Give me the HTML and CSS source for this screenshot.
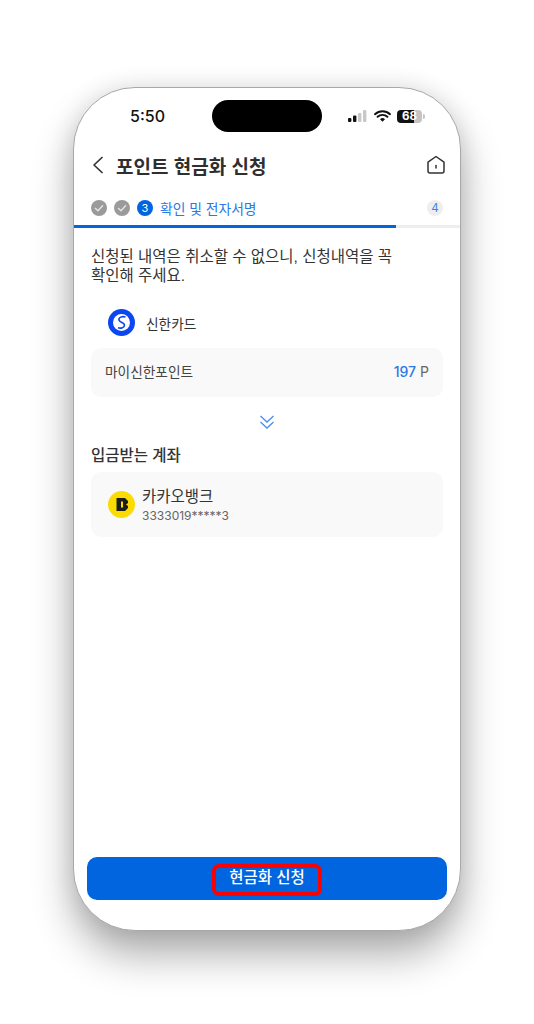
FILE: index.html
```html
<!DOCTYPE html>
<html lang="ko">

<head>
    <meta charset="UTF-8">
    <meta name="viewport" content="width=device-width, initial-scale=1.0">
    <title>포인트 현금화 신청</title>
    <link rel="stylesheet" href="styles.css">
</head>

<body>
    <div class="phone">
        <div class="statusbar">
            <span class="time">5:50</span>
            <div class="island"></div>
            <div class="status-icons">
                <svg class="signal" width="20" height="12" viewBox="0 0 20 12">
                    <rect x="0" y="8" width="3.4" height="4" rx="1" fill="#111"/>
                    <rect x="5" y="5.6" width="3.4" height="6.4" rx="1" fill="#111"/>
                    <rect x="10" y="3" width="3.4" height="9" rx="1" fill="#c8c8c8"/>
                    <rect x="15" y="0" width="3.4" height="12" rx="1" fill="#c8c8c8"/>
                </svg>
                <svg class="wifi" width="17" height="12" viewBox="0 0 17 12">
                    <path d="M1 4.2a11 11 0 0 1 15 0M3.6 6.8a7.2 7.2 0 0 1 9.8 0" fill="none" stroke="#111" stroke-width="1.9" stroke-linecap="round"/>
                    <path d="M6 9.2a3.5 3.5 0 0 1 5 0L8.500 11.800z" fill="#111"/>
                </svg>
                <div class="battery"><span class="battery-num">68</span></div>
                <div class="battery-cap"></div>
            </div>
        </div>

        <div class="topbar">
            <svg class="back" width="12" height="18" viewBox="0 0 12 18">
                <path d="M10 1.500L2 9l8 7.500" fill="none" stroke="#333" stroke-width="1.700" stroke-linecap="round" stroke-linejoin="round"/>
            </svg>
            <h1 class="title">포인트 현금화 신청</h1>
            <svg class="home" width="20" height="20" viewBox="0 0 20 20">
                <path d="M2 7.200L10 1.500l8 5.700V16a2 2 0 0 1-2 2H4a2 2 0 0 1-2-2z" fill="none" stroke="#333" stroke-width="1.500" stroke-linejoin="round"/>
                <path d="M10 10.500v2.600" stroke="#333" stroke-width="1.500" stroke-linecap="round"/>
            </svg>
        </div>

        <div class="steps">
            <span class="step-done"><svg width="10" height="8" viewBox="0 0 10 8"><path d="M1 4l3 2.800L9 1.200" fill="none" stroke="#e4e4e4" stroke-width="1.400"/></svg></span>
            <span class="step-done"><svg width="10" height="8" viewBox="0 0 10 8"><path d="M1 4l3 2.800L9 1.200" fill="none" stroke="#e4e4e4" stroke-width="1.400"/></svg></span>
            <span class="step-now">3</span>
            <span class="step-label">확인 및 전자서명</span>
            <span class="step-total">4</span>
        </div>
        <div class="progress"><div class="progress-fill"></div></div>

        <div class="content">
            <p class="notice">신청된 내역은 취소할 수 없으니, 신청내역을 꼭<br>확인해 주세요.</p>

            <div class="card-head">
                <svg class="logo" width="27" height="27" viewBox="0 0 27 27">
                    <circle cx="13.500" cy="13.500" r="13.500" fill="#0b46f0"/>
                    <circle cx="13.500" cy="13.500" r="8.500" fill="#fff"/>
                    <path d="M17.500 8C14 6.800 10.500 8.500 11 11c.5 2.500 5.500 2.500 5.500 5 0 2.500-3.500 3.800-6.500 2.800" fill="none" stroke="#0b46f0" stroke-width="1.600"/>
                </svg>
                <span class="card-name">신한카드</span>
            </div>
            <div class="box point-box">
                <span class="point-name">마이신한포인트</span>
                <span class="point-value"><b>197</b> P</span>
            </div>

            <div class="arrow">
                <svg width="16" height="16" viewBox="0 0 16 16">
                    <path d="M1.500 2L8 8l6.500-6M1.500 8L8 14l6.500-6" fill="none" stroke="#4a8df0" stroke-width="1.300"/>
                </svg>
            </div>

            <h2 class="sub-title">입금받는 계좌</h2>
            <div class="box bank-box">
                <svg class="logo" width="27" height="27" viewBox="0 0 27 27">
                    <circle cx="13.500" cy="13.500" r="13.500" fill="#fcdc00"/>
                    <path d="M8.500 7h8.500l3 3v2l-2 1.500 2 1.500v2l-3 3H8.500z" fill="#1c1c1c"/>
                    <rect x="13" y="10.500" width="2" height="6" fill="#fcdc00"/>
                </svg>
                <div class="bank-info">
                    <div class="bank-name">카카오뱅크</div>
                    <div class="bank-account">3333019*****3</div>
                </div>
            </div>
        </div>

        <div class="btn-area">
            <div class="submit-btn"><span class="submit-mark">현금화 신청</span></div>
        </div>
    </div>
</body>

</html>
```

FILE: styles.css
```css
* {
    box-sizing: border-box;
}

html,
body {
    margin: 0;
    height: 1024px;
    overflow: hidden;
    background-color: #fff;
    font-family: 'Liberation Sans', 'Noto Sans CJK KR', sans-serif;
}

body {
    padding: 87px 0 0 73px;
}

.phone {
    display: flex;
    flex-direction: column;
    width: 388px;
    height: 844px;
    background-color: #fff;
    border: 1px solid #a8a8a8;
    border-radius: 62px;
    box-shadow: 0 24px 40px rgba(0, 0, 0, 0.32), 0 0 24px rgba(0, 0, 0, 0.1);
}

/* status bar */
.statusbar {
    display: flex;
    align-items: center;
    height: 32px;
    margin-top: 12px;
    padding-left: 56px;
}

.time {
    width: 82px;
    font-family: 'Inter', sans-serif;
    font-size: 16px;
    font-weight: 500;
    color: #111;
}

.island {
    width: 110px;
    height: 32px;
    border-radius: 16px;
    background-color: #000;
}

.status-icons {
    display: flex;
    align-items: center;
    margin-left: 26px;
}

.wifi {
    margin-left: 6px;
}

.battery {
    width: 25px;
    height: 13px;
    margin-left: 6px;
    border-radius: 4px;
    background: linear-gradient(to right, #111 68%, #c4c4c4 68%);
    text-align: center;
}

.battery-num {
    display: block;
    font-family: 'Inter', sans-serif;
    font-size: 11.500px;
    font-weight: 700;
    line-height: 13px;
    color: #fff;
}

.battery-cap {
    width: 2px;
    height: 5px;
    margin-left: 1px;
    border-radius: 0 2px 2px 0;
    background-color: #c4c4c4;
}

/* header */
.topbar {
    display: flex;
    align-items: center;
    height: 30px;
    margin-top: 18px;
    padding: 0 14px 0 18px;
}

.title {
    flex: 1;
    margin: 0 0 0 12px;
    font-size: 19px;
    font-weight: 700;
    color: #2f2f2f;
}

/* steps */
.steps {
    display: flex;
    align-items: center;
    height: 20px;
    margin-top: 18px;
    padding: 0 17px;
}

.step-done,
.step-now {
    display: flex;
    align-items: center;
    justify-content: center;
    width: 16px;
    height: 16px;
    margin-right: 7px;
    border-radius: 50%;
    background-color: #9a9a9a;
}

.step-now {
    background-color: #0065de;
    font-family: 'Inter', sans-serif;
    font-size: 11px;
    color: #fff;
}

.step-label {
    flex: 1;
    font-size: 13.800px;
    color: #2a78e4;
}

.step-total {
    width: 16px;
    height: 16px;
    border-radius: 50%;
    background-color: #eeeeee;
    font-family: 'Inter', sans-serif;
    font-size: 11.500px;
    line-height: 16px;
    text-align: center;
    color: #3d83e6;
}

.progress {
    height: 3px;
    margin-top: 7px;
    background-color: #eeeeee;
}

.progress-fill {
    width: 83.500%;
    height: 100%;
    background-color: #0065de;
}

/* body */
.content {
    flex: 1;
    padding: 0 17px;
}

.notice {
    margin: 19px 0 0 0;
    font-size: 15.500px;
    line-height: 19px;
    color: #333;
}

.card-head {
    display: flex;
    align-items: center;
    margin-top: 24px;
    padding-left: 17px;
}

.card-name {
    margin-left: 11px;
    font-size: 13.700px;
    color: #333;
}

.box {
    display: flex;
    align-items: center;
    background-color: #f9f9f9;
    border-radius: 10px;
}

.point-box {
    justify-content: space-between;
    height: 49px;
    margin-top: 12px;
    padding: 0 14px 3px 14px;
}

.point-name {
    font-size: 13.700px;
    color: #444;
}

.point-value {
    font-family: 'Inter', sans-serif;
    font-size: 14px;
    color: #666;
}

.point-value b {
    font-weight: 500;
    color: #2a78e4;
}

.arrow {
    display: flex;
    justify-content: center;
    height: 16px;
    margin-top: 17px;
}

.sub-title {
    margin: 16px 0 0 0;
    font-size: 15.500px;
    font-weight: 500;
    line-height: 20px;
    color: #333;
}

.bank-box {
    height: 65px;
    margin-top: 6px;
    padding-left: 17px;
}

.bank-info {
    margin-top: 2px;
    margin-left: 7px;
}

.bank-name {
    font-size: 15.500px;
    line-height: 20px;
    color: #333;
}

.bank-account {
    font-family: 'Inter', sans-serif;
    font-size: 12px;
    line-height: 17px;
    color: #666;
}

/* bottom button */
.btn-area {
    padding: 0 13px 30px 13px;
}

.submit-btn {
    display: flex;
    align-items: center;
    justify-content: center;
    height: 43px;
    border-radius: 10px;
    background-color: #0065de;
}

.submit-mark {
    width: 110px;
    height: 32px;
    margin-top: 3px;
    border: 4px solid #ff0000;
    border-radius: 7px;
    font-size: 15.500px;
    font-weight: 500;
    line-height: 20px;
    text-align: center;
    color: #fff;
}
```
